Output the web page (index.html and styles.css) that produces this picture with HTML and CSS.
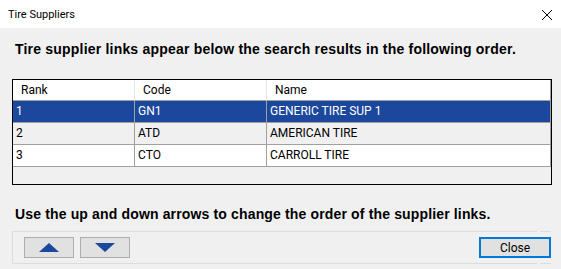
FILE: index.html
```html
<!DOCTYPE html>
<html lang="en">
<head>
  <meta charset="UTF-8">
  <title>Tire Suppliers</title>
  <link rel="stylesheet" href="styles.css">
</head>
<body>

  <div class="janela">
    <div class="titulo">
      <span>Tire Suppliers</span>
      <svg class="fechar-x" width="12" height="12" viewBox="0 0 12 12">
        <path d="M1 1 L11 11 M11 1 L1 11" stroke="#000" stroke-width="1" fill="none"/>
      </svg>
    </div>

    <div class="conteudo">
      <p class="aviso">Tire supplier links appear below the search results in the following order.</p>

      <div class="grade">
        <div class="linha cabecalho">
          <div>Rank</div>
          <div>Code</div>
          <div>Name</div>
        </div>
        <div class="linha selecionada">
          <div>1</div>
          <div>GN1</div>
          <div>GENERIC TIRE SUP 1</div>
        </div>
        <div class="linha alternada">
          <div>2</div>
          <div>ATD</div>
          <div>AMERICAN TIRE</div>
        </div>
        <div class="linha">
          <div>3</div>
          <div>CTO</div>
          <div>CARROLL TIRE</div>
        </div>
      </div>

      <p class="aviso rodape">Use the up and down arrows to change the order of the supplier links.</p>

      <div class="barra">
        <div class="painel">
          <div class="setas">
            <button class="seta">
              <svg width="20" height="9" viewBox="0 0 20 9"><path d="M10 0 L20 9 L0 9 Z" fill="#1b479d"/></svg>
            </button>
            <button class="seta">
              <svg width="20" height="9" viewBox="0 0 20 9"><path d="M0 0 L20 0 L10 9 Z" fill="#1b479d"/></svg>
            </button>
          </div>
          <button class="fechar">Close</button>
        </div>
        <div class="sobra"></div>
      </div>
    </div>
  </div>

</body>
</html>
```

FILE: styles.css
```css
/* RESET & FONTE */
* {
  margin: 0;
  padding: 0;
  box-sizing: border-box;
}

body {
  font-family: Roboto, 'Liberation Sans', sans-serif;
  background: #f0f0f0;
  width: 561px;
  height: 269px;
  overflow: hidden;
}

.titulo {
  height: 28px;
  background: #fff;
  display: flex;
  align-items: center;
  justify-content: space-between;
  padding: 0 8px 0 8px;
  font-size: 11px;
  color: #000;
}

.fechar-x {
  margin-top: 1px;
}

.conteudo {
  padding: 0 10px 0 12px;
}

.aviso {
  font-family: 'Liberation Sans', Arial, sans-serif;
  font-size: 14px;
  font-weight: bold;
  color: #000;
  line-height: 16px;
  letter-spacing: 0.2px;
  margin: 13px 0 0 3px;
}

/* Grade de fornecedores */
.grade {
  margin-top: 22px;
  width: 540px;
  height: 106px;
  border: 1px solid #000;
  background: #f0f0f0;
  font-size: 12px;
}

.linha {
  display: grid;
  grid-template-columns: 122px 132px 284px;
  height: 22px;
  background: #fff;
  color: #000;
}

.linha div {
  border-right: 1px solid #a0a0a0;
  border-bottom: 1px solid #a0a0a0;
  padding-left: 3px;
  line-height: 21px;
  white-space: nowrap;
  overflow: hidden;
}

.cabecalho {
  height: 21px;
}

.cabecalho div {
  padding-left: 8px;
  line-height: 20px;
  border-right-color: #e5e5e5;
}

.cabecalho div:last-child {
  border-right-color: #a0a0a0;
}

.selecionada {
  background: #1b479d;
  color: #fff;
}

.alternada {
  background: #f0f0f0;
}

.rodape {
  margin-top: 21px;
  letter-spacing: 0.15px;
}

/* Barra de botões */
.barra {
  margin-top: 9px;
  display: flex;
  gap: 3px;
}

.painel {
  width: 526px;
  height: 33px;
  border-top: 1px solid #dcdcdc;
  border-bottom: 1px solid #dcdcdc;
  border-left: 1px solid #dcdcdc;
  display: flex;
  align-items: center;
  justify-content: space-between;
  padding: 0 0 0 11px;
  position: relative;
}

.sobra {
  width: 11px;
  height: 33px;
  border-top: 1px solid #dcdcdc;
  border-bottom: 1px solid #dcdcdc;
}

.setas {
  display: flex;
  gap: 6px;
}

button {
  font-family: Roboto, 'Liberation Sans', sans-serif;
  font-size: 12px;
  background: #e1e1e1;
  border: 1px solid #adadad;
  color: #000;
}

.seta {
  width: 50px;
  height: 21px;
  display: flex;
  align-items: center;
  justify-content: center;
}

.fechar {
  position: absolute;
  right: -14px;
  top: 5px;
  width: 72px;
  height: 21px;
  border: 2px solid #0078d7;
}
```
